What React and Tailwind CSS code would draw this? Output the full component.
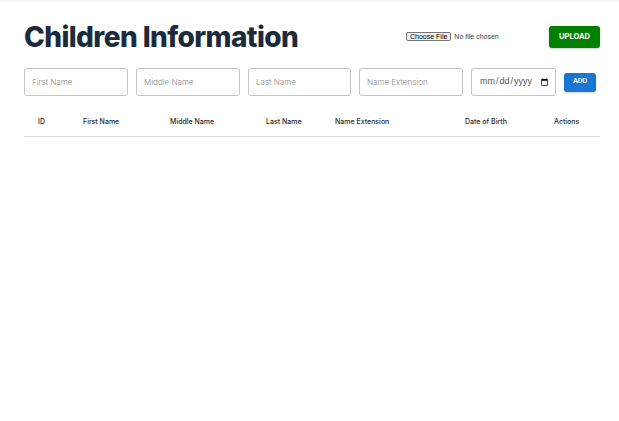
import React from "react";

export default function App() {
  const cols = [
    ["ID", "w-[45px]"],
    ["First Name", "w-[87px]"],
    ["Middle Name", "w-[96px]"],
    ["Last Name", "w-[69px]"],
    ["Name Extension", "w-[130px]"],
    ["Date of Birth", "w-[89px]"],
    ["Actions", "w-[60px]"],
  ];
  const inputs = ["First Name", "Middle Name", "Last Name", "Name Extension"];
  return (
    <div className="h-[421px] w-full overflow-hidden bg-white font-['Inter','Noto_Sans',sans-serif]">
      <div className="h-[2px] bg-[#f6f6f6]" />
      <div className="w-[600px] pl-6 pt-[18px]">
        <div className="flex h-[34px] items-center justify-between">
          <h1 className="text-[28px] font-extrabold leading-none tracking-[-0.6px] text-[#1c2b3c]">
            Children Information
          </h1>
          <div className="flex items-center gap-2">
            <input
              type="file"
              className="w-[135px] font-['Liberation_Sans',Arial,sans-serif] text-[7px] text-[#444] file:mr-[3px] file:rounded-[2px] file:border file:border-[#767676] file:bg-[#efefef] file:px-[3px] file:py-0 file:text-[7px] file:leading-[7px] file:text-black"
            />
            <button className="h-[22px] w-[51px] rounded-[3px] bg-[#008000] text-[7.5px] font-bold text-white shadow-[0_1px_2px_rgba(0,0,0,0.2)]">
              UPLOAD
            </button>
          </div>
        </div>

        <div className="mt-[14px] flex items-center gap-2">
          {inputs.map((p) => (
            <input
              key={p}
              placeholder={p}
              className={`h-[28px] shrink-0 ${p === "Last Name" ? "w-[103px]" : "w-[104px]"} rounded-[3px] border border-[#c4c4c4] px-[7px] text-[8px] font-light text-[#333] outline-none placeholder:text-[#8a8a8a]`}
            />
          ))}
          <input
            type="date"
            className="h-[28px] w-[85px] shrink-0 rounded-[3px] border border-[#c4c4c4] pl-[7px] pr-[4px] font-['Liberation_Sans',Arial,sans-serif] text-[9px] text-[#555] outline-none"
          />
          <button className="h-[19px] w-[32px] shrink-0 rounded-[3px] bg-[#1976d2] text-[6.5px] font-bold text-white shadow-[0_1px_2px_rgba(0,0,0,0.2)]">
            ADD
          </button>
        </div>

        <div className="mt-[12px] flex h-[29px] items-center border-b border-[#e0e0e0]">
          {cols.map(([c, w]) => (
            <div key={c} className={`${w} shrink-0 pl-[14px] text-[7px] font-medium text-[#2a2a2a]`}>
              {c}
            </div>
          ))}
        </div>
      </div>
    </div>
  );
}
